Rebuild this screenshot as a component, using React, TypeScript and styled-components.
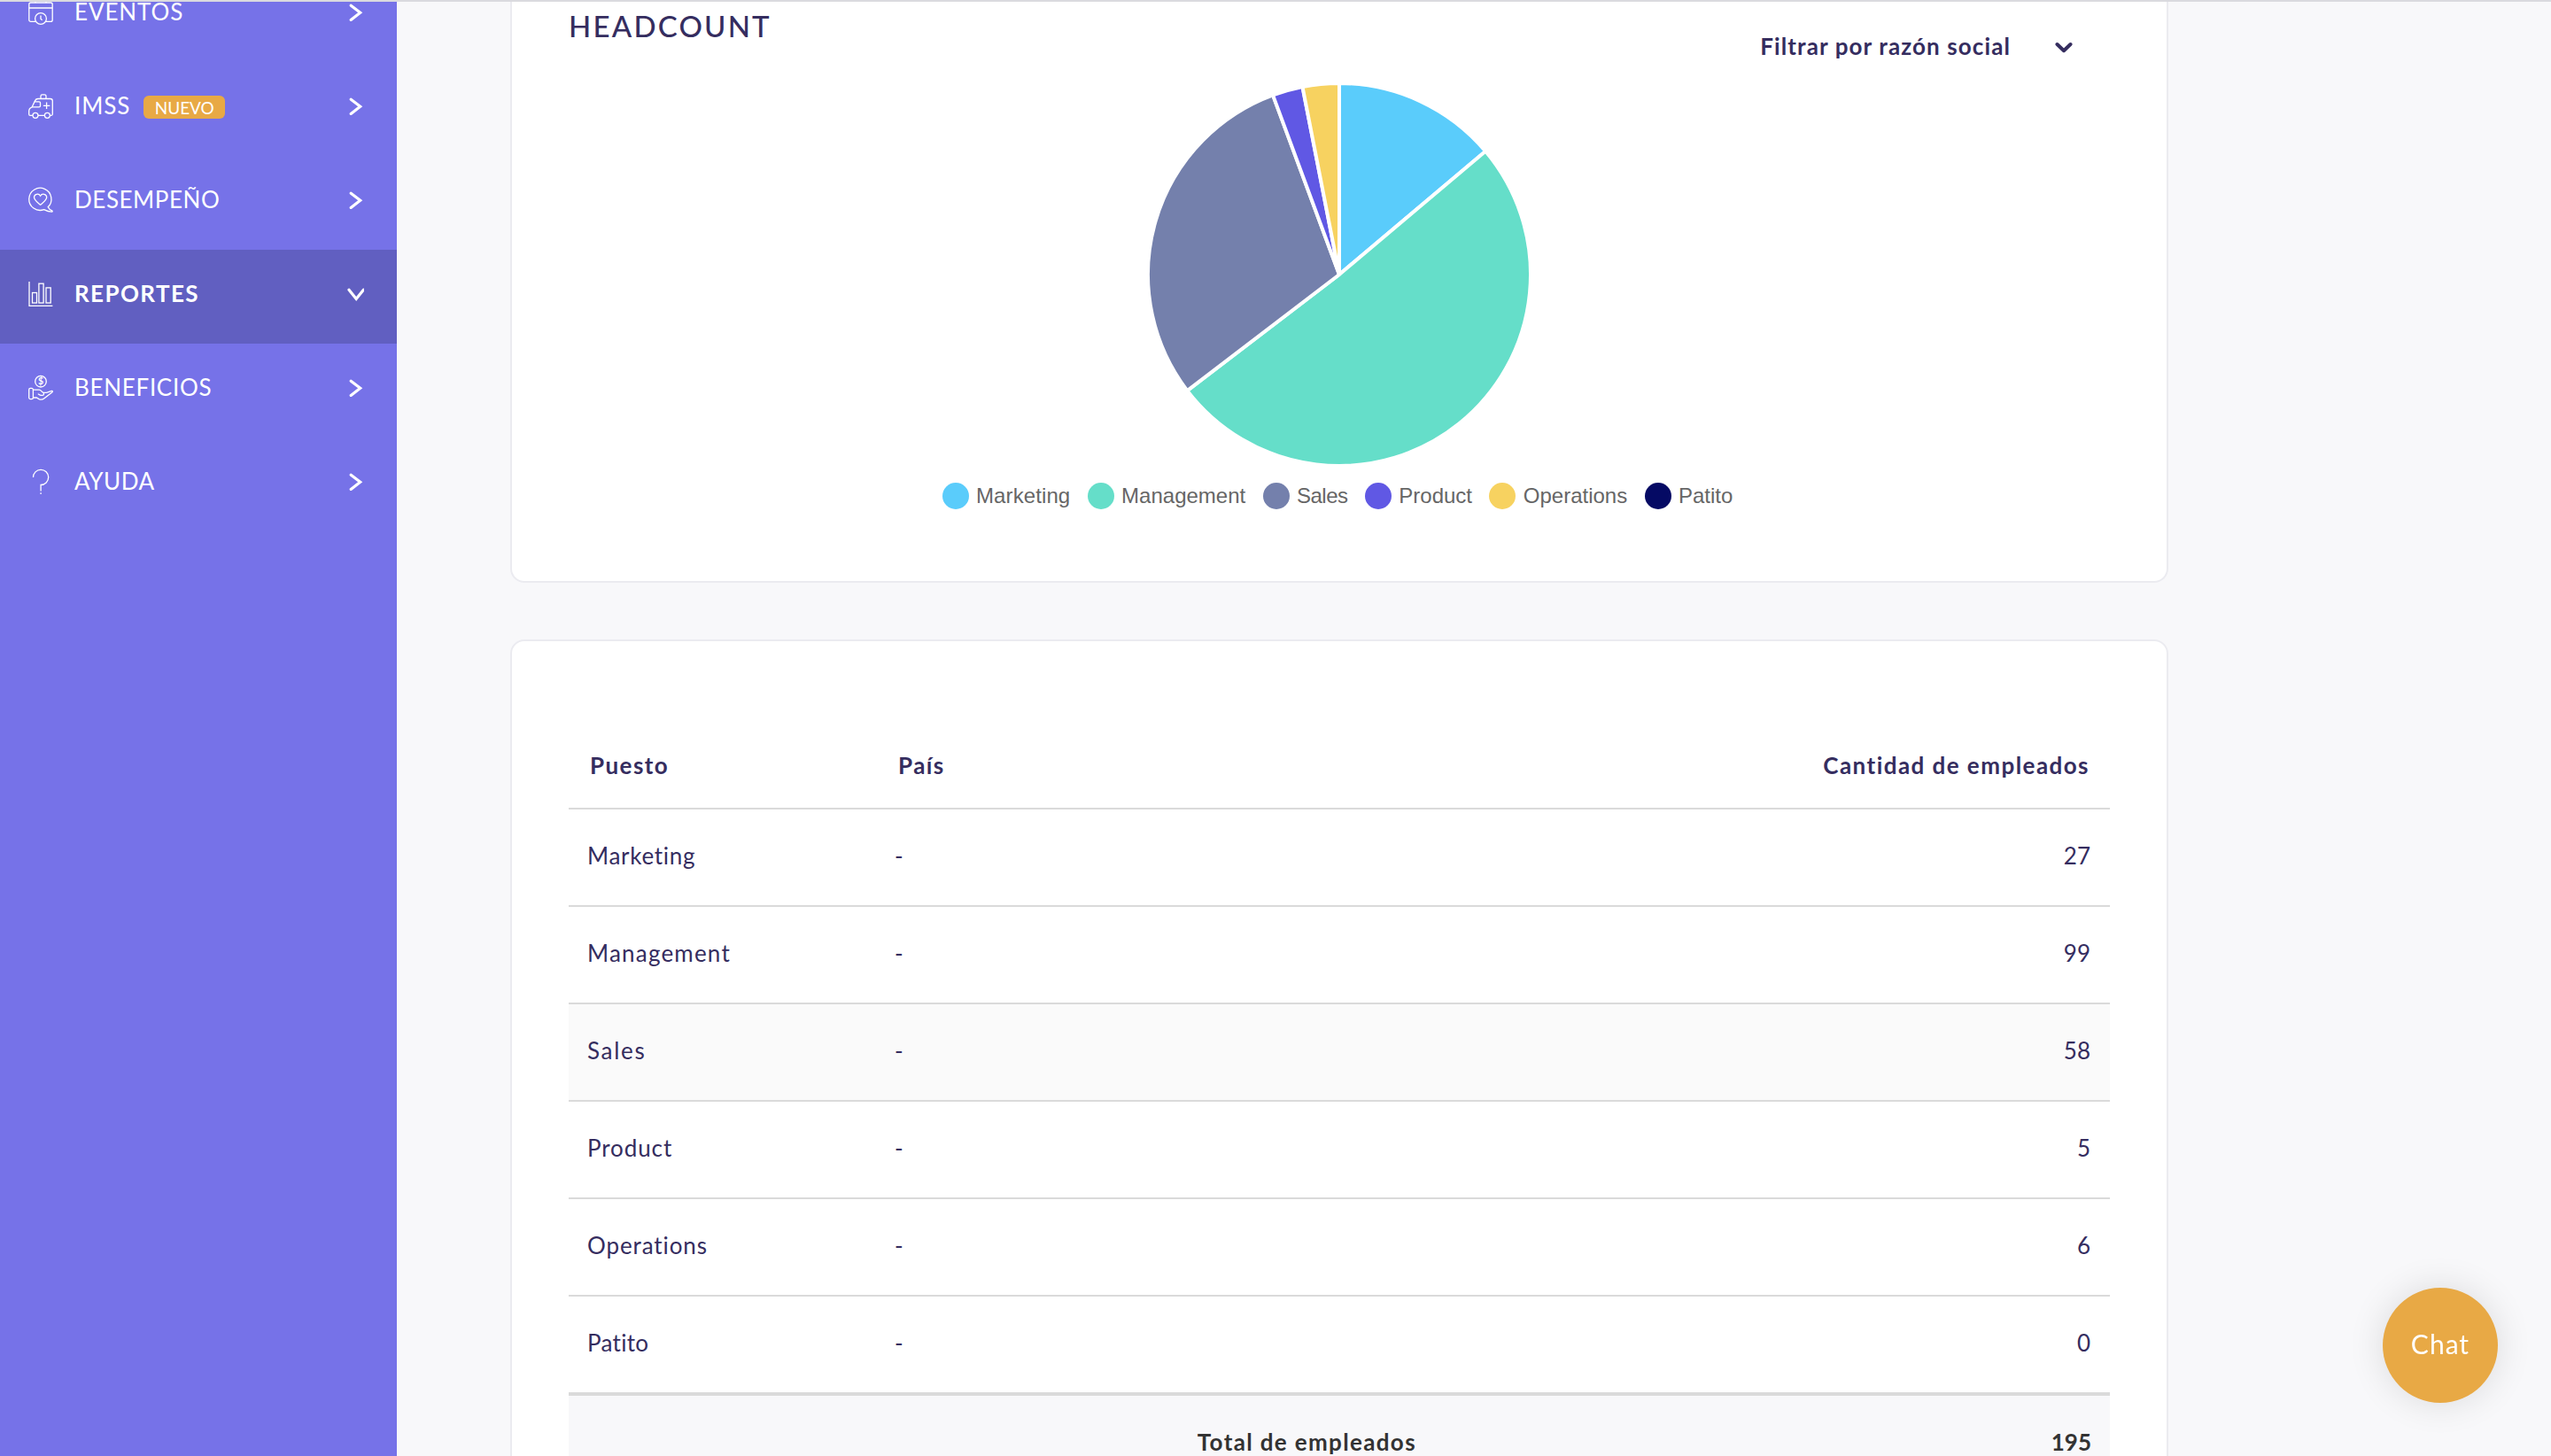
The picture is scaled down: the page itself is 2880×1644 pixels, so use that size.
import React from 'react';
import styled, { createGlobalStyle } from 'styled-components';

const slices = [
  { name: 'Marketing', value: 27, color: '#5accfb', spacing: 0.7, legendSpacing: 0.1 },
  { name: 'Management', value: 99, color: '#65dec9', spacing: 1.2, legendSpacing: 0 },
  { name: 'Sales', value: 58, color: '#7480ac', spacing: 1.7, legendSpacing: -0.5 },
  { name: 'Product', value: 5, color: '#6058e4', spacing: 0.9, legendSpacing: 0 },
  { name: 'Operations', value: 6, color: '#f7d260', spacing: 0.9, legendSpacing: 0 },
  { name: 'Patito', value: 0, color: '#050a64', spacing: 0.3, legendSpacing: 0 },
];

const total = slices.reduce((sum, s) => sum + s.value, 0);

const CalendarIcon = () => (
  <MenuIcon viewBox="0 0 28 28">
    <rect x="0.8" y="3" width="26.4" height="21.4" rx="2" />
    <path d="M1 9h26M8 0v3M20 0v3" />
    <circle cx="14" cy="21" r="6.4" fill="#7672e8" />
    <path d="M14 17.4v3.8l1.6 1.6" />
  </MenuIcon>
);

const AmbulanceIcon = () => (
  <MenuIcon viewBox="0 0 28 28">
    <path d="M5 24.3H2A1.3 1.3 0 0 1 .7 23v-3.6c0-2.8 1.7-3.9 3.5-4.6L7.6 7.6C8.3 6.2 9.3 5.5 11 5.5h13.7a2.6 2.6 0 0 1 2.6 2.6v14.7a1.5 1.5 0 0 1-1.5 1.5h-1.4M11 24.3h7.3" />
    <path d="M14 5.4V2.6A1.8 1.8 0 0 1 15.8.8h2.4A1.8 1.8 0 0 1 20 2.6v2.8M7.2 8.8h5a1.3 1.3 0 0 1 1.3 1.3v3.5a1.3 1.3 0 0 1-1.3 1.3h-8M20.6 9.6v7.4M16.9 13.3h7.4" />
    <circle cx="8" cy="24.3" r="3" />
    <circle cx="21.4" cy="24.3" r="3" />
  </MenuIcon>
);

const HeartBubbleIcon = () => (
  <MenuIcon viewBox="0 0 28 28">
    <path d="M22.2 21.8A12.6 12.6 0 1 0 17.6 24.7C20.5 26.2 23.6 27.3 26.6 27.2c.8 0 .7-.9.1-1.4-2-.8-3.6-2-4.5-4z" />
    <path d="M13.6 19.2C9.8 16 6.5 14 6.5 10.8c0-3.8 5.2-5.1 7.1-1.6 1.9-3.5 7.1-2.2 7.1 1.6 0 3.2-3.3 5.2-7.1 8.4z" />
  </MenuIcon>
);

const BarsIcon = () => (
  <MenuIcon viewBox="0 0 28 28">
    <path d="M1 0v27.3h26.4" />
    <rect x="4.5" y="12.5" width="5" height="11.5" />
    <rect x="11.9" y="2.2" width="5.2" height="21.8" />
    <rect x="20" y="6.9" width="5.2" height="17.1" />
  </MenuIcon>
);

const BenefitsIcon = () => (
  <MenuIcon viewBox="0 0 28 28">
    <circle cx="14" cy="6.7" r="6.3" />
    <text x="14" y="10.4" textAnchor="middle">$</text>
    <rect x="0.7" y="14.4" width="4.7" height="12.2" rx="1.6" />
    <path d="M5.4 16.1h6.8c2.3 0 2.5 2.5 4.8 3.3h3.5l5.8-1.9c1.2-.2 1.4.6.7 1.2L18 25.8c-1.8 1.4-3.7 1.9-6 .8l-2.7-1.6H5.4" />
    <path d="M10.8 20.8c1.3 0 1.7 1.5 3.3 1.5h2.1c1.4 0 1.7-1.6.8-2.9" />
  </MenuIcon>
);

const HelpIcon = () => (
  <MenuIcon viewBox="0 0 28 28">
    <path d="M5.5 9a8.6 8.6 0 1 1 8.6 8.5v7M14.1 26.2v1.8" />
  </MenuIcon>
);

const menu = [
  { label: 'EVENTOS', icon: <CalendarIcon />, spacing: 0.9 },
  { label: 'IMSS', icon: <AmbulanceIcon />, badge: 'NUEVO', spacing: 0.9 },
  { label: 'DESEMPEÑO', icon: <HeartBubbleIcon />, spacing: 0.55 },
  { label: 'REPORTES', icon: <BarsIcon />, active: true, spacing: 1.4 },
  { label: 'BENEFICIOS', icon: <BenefitsIcon />, spacing: 0.7 },
  { label: 'AYUDA', icon: <HelpIcon />, spacing: 0.5 },
];

const point = (value: number) => {
  const angle = (value / total) * Math.PI * 2;
  return `${216 + 216 * Math.sin(angle)} ${216 - 216 * Math.cos(angle)}`;
};

function PieChart() {
  let start = 0;

  return (
    <Pie viewBox="-2 -2 436 436">
      {slices.map((s) => {
        const from = start;
        start += s.value;
        const large = s.value > total / 2 ? 1 : 0;
        return (
          <path
            key={s.name}
            d={`M216 216L${point(from)}A216 216 0 ${large} 1 ${point(start)}Z`}
            fill={s.color}
          />
        );
      })}
    </Pie>
  );
}

export default function App() {
  return (
    <Page>
      <GlobalStyle />
      <TopLine />
      <Body>
        <Sidebar>
          <Menu>
            {menu.map((item) => (
              <MenuItem key={item.label} $active={item.active}>
                {item.icon}
                <MenuLabel $active={item.active} $spacing={item.spacing}>{item.label}</MenuLabel>
                {item.badge && <Badge>{item.badge}</Badge>}
                <MenuArrow viewBox="0 0 20 20">
                  <path d={item.active ? 'M3 5.3L11.2 15.5L19.4 5.3' : 'M5.2 2.2L15.7 10.2L5.2 18.4'} />
                </MenuArrow>
              </MenuItem>
            ))}
          </Menu>
        </Sidebar>
        <Content>
          <ChartCard>
            <CardHeader>
              <Title>HEADCOUNT</Title>
              <Filter>
                <span>Filtrar por razón social</span>
                <svg viewBox="0 0 20 14">
                  <path d="M2.5 3L10 10.2L17.5 3" />
                </svg>
              </Filter>
            </CardHeader>
            <PieChart />
            <Legend>
              {slices.map((s) => (
                <LegendItem key={s.name} $color={s.color} $spacing={s.legendSpacing}>{s.name}</LegendItem>
              ))}
            </Legend>
          </ChartCard>
          <TableCard>
            <HeadRow>
              <span>Puesto</span>
              <span>País</span>
              <span>Cantidad de empleados</span>
            </HeadRow>
            {slices.map((s) => (
              <Row key={s.name} $hover={s.name === 'Sales'}>
                <Name $spacing={s.spacing}>{s.name}</Name>
                <span>-</span>
                <span>{s.value}</span>
              </Row>
            ))}
            <TotalRow>
              <TotalLabel>Total de empleados</TotalLabel>
              <span>{total}</span>
            </TotalRow>
          </TableCard>
        </Content>
      </Body>
      <ChatButton>Chat</ChatButton>
    </Page>
  );
}

const GlobalStyle = createGlobalStyle`
  * {
    box-sizing: border-box;
  }
  body {
    margin: 0;
    background: #f8f8fa;
    color: #352d5f;
    font-family: Lato, sans-serif;
    font-size: 26px;
    font-variant-ligatures: none;
  }
`;

const Page = styled.div`
  display: flex;
  flex-direction: column;
  height: 1644px;
  overflow: hidden;
`;

const TopLine = styled.div`
  flex: none;
  height: 2px;
  background: #dadadf;
`;

const Body = styled.div`
  display: flex;
  flex: 1;
  min-height: 0;
`;

const Sidebar = styled.nav`
  flex: none;
  width: 448px;
  overflow: hidden;
  background: #7672e8;
`;

const Menu = styled.ul`
  margin: -38px 0 0;
  padding: 0;
  list-style: none;
`;

const MenuItem = styled.li<{ $active?: boolean }>`
  display: flex;
  align-items: center;
  height: 106px;
  padding: 0 37px 6px 32px;
  color: #fff;
  background: ${({ $active }) => ($active ? '#615fc1' : 'transparent')};
`;

const MenuIcon = styled.svg`
  flex: none;
  width: 28px;
  height: 28px;
  overflow: visible;
  fill: none;
  stroke: #fff;
  stroke-width: 1.3;

  & text {
    fill: #fff;
    stroke: none;
    font-size: 10.5px;
    font-weight: bold;
  }
`;

const MenuLabel = styled.span<{ $active?: boolean; $spacing: number }>`
  margin: -3px 0 0 24px;
  line-height: 20px;
  font-weight: ${({ $active }) => ($active ? 700 : 400)};
  letter-spacing: ${({ $spacing }) => $spacing}px;
`;

const Badge = styled.span`
  display: flex;
  align-items: center;
  justify-content: center;
  width: 92px;
  height: 26px;
  margin: 2px 0 0 15px;
  border-radius: 6px;
  background: #e8a945;
  font-size: 19px;
`;

const MenuArrow = styled.svg`
  width: 20px;
  height: 20px;
  margin-left: auto;
  fill: none;
  stroke: #fff;
  stroke-width: 3.2;
  stroke-linecap: round;
`;

const Content = styled.main`
  display: flex;
  flex-direction: column;
  gap: 64px;
  width: 2000px;
  padding-left: 128px;
`;

const Card = styled.section`
  flex: none;
  padding: 0 64px;
  border: 2px solid #ebebf0;
  border-radius: 16px;
  background: #fff;
`;

const ChartCard = styled(Card)`
  display: flex;
  flex-direction: column;
  align-items: center;
  height: 656px;
  border-top: none;
  border-top-left-radius: 0;
  border-top-right-radius: 0;
`;

const CardHeader = styled.header`
  display: flex;
  justify-content: space-between;
  align-self: stretch;
  height: 90px;
`;

const Title = styled.h2`
  margin: 7px 0 0;
  font-size: 33px;
  line-height: 40px;
  font-weight: 500;
  letter-spacing: 2.2px;
`;

const Filter = styled.div`
  display: flex;
  align-items: center;
  gap: 50px;
  height: 32px;
  margin: 34px 42px 0 0;
  font-weight: 700;
  letter-spacing: 1.1px;

  & svg {
    width: 20px;
    height: 14px;
    margin-top: 4px;
    fill: none;
    stroke: #352d5f;
    stroke-width: 4;
    stroke-linecap: round;
    stroke-linejoin: round;
  }
`;

const Pie = styled.svg`
  flex: none;
  width: 436px;
  height: 436px;
  stroke: #fff;
  stroke-width: 4;
  stroke-linejoin: bevel;
`;

const Legend = styled.div`
  display: flex;
  gap: 19.4px;
  margin: 17px 4px 0 0;
`;

const LegendItem = styled.div<{ $color: string; $spacing: number }>`
  display: flex;
  align-items: center;
  gap: 8.4px;
  height: 30px;
  color: #666;
  font-family: 'Liberation Sans', Arial, sans-serif;
  font-size: 24px;
  letter-spacing: ${({ $spacing }) => $spacing}px;

  &::before {
    content: '';
    width: 30px;
    height: 30px;
    border-radius: 50%;
    background: ${({ $color }) => $color};
  }
`;

const TableCard = styled(Card)`
  height: 1100px;
  padding-top: 94px;
`;

const Row = styled.div<{ $hover?: boolean }>`
  display: grid;
  grid-template-columns: 347px 1fr auto;
  align-items: center;
  height: 110px;
  padding: 0 22px 4px 21px;
  border-bottom: 2px solid #dadada;
  background: ${({ $hover }) => ($hover ? '#fafafa' : '#fff')};

  &:nth-last-child(2) {
    border-bottom: none;
    padding-bottom: 6px;
  }
`;

const HeadRow = styled(Row)`
  grid-template-columns: 348px 1fr auto;
  height: 96px;
  padding: 0 23px 2px 24px;
  font-weight: 700;
  letter-spacing: 1.45px;
`;

const Name = styled.span<{ $spacing: number }>`
  letter-spacing: ${({ $spacing }) => $spacing}px;
`;

const TotalRow = styled.div`
  display: flex;
  align-items: center;
  height: 110px;
  margin-top: -2px;
  padding: 0 21px 2px 0;
  border-top: 4px solid #dadada;
  background: #f8f8fa;
  color: #333;
  font-weight: 700;
`;

const TotalLabel = styled.span`
  flex: 1;
  padding-right: 7px;
  text-align: center;
  letter-spacing: 1.35px;
`;

const ChatButton = styled.button`
  position: fixed;
  right: 60px;
  bottom: 60px;
  width: 130px;
  height: 130px;
  padding: 0 0 4px;
  border: none;
  border-radius: 50%;
  background: #e8a945;
  box-shadow: 0 0 40px rgba(0, 0, 0, 0.12);
  color: #fff;
  font-family: inherit;
  font-size: 30px;
  letter-spacing: 1px;
`;
